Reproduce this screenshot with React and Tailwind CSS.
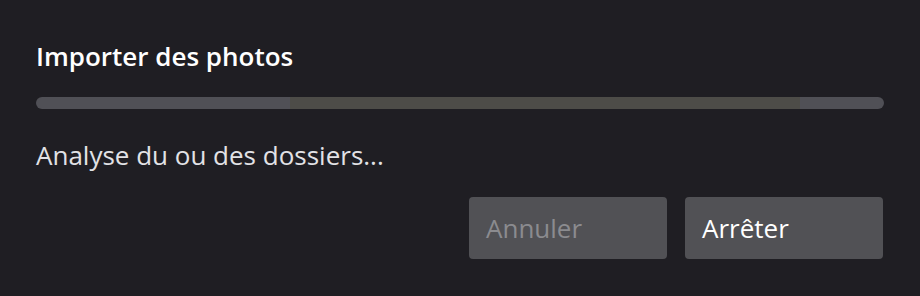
export default function App() {
  return (
    <div
      className="w-[920px] h-[296px] bg-[#1f1e23] px-9 pt-[38px] flex flex-col"
      style={{ fontFamily: '"Open Sans", "Noto Sans", sans-serif' }}
    >
      <h1 className="text-[26px] leading-[36px] font-semibold text-white">
        Importer des photos
      </h1>
      <div className="mt-[23px] h-3 w-[848px] rounded-full bg-[#505056] overflow-hidden flex">
        <div className="w-[254px]" />
        <div className="w-[510px] bg-[#4d4c48]" />
      </div>
      <p className="mt-[28px] text-[26px] leading-[36px] text-[#e2e2e6]">
        Analyse du ou des dossiers...
      </p>
      <div className="mt-[24px] flex justify-end gap-[18px] pr-[1px]">
        <button className="w-[198px] h-[62px] rounded bg-[#515155] text-left pl-[17px] text-[26px] text-[#8b8b8f]">
          Annuler
        </button>
        <button className="w-[198px] h-[62px] rounded bg-[#515155] text-left pl-[17px] text-[26px] text-white">
          Arrêter
        </button>
      </div>
    </div>
  );
}
